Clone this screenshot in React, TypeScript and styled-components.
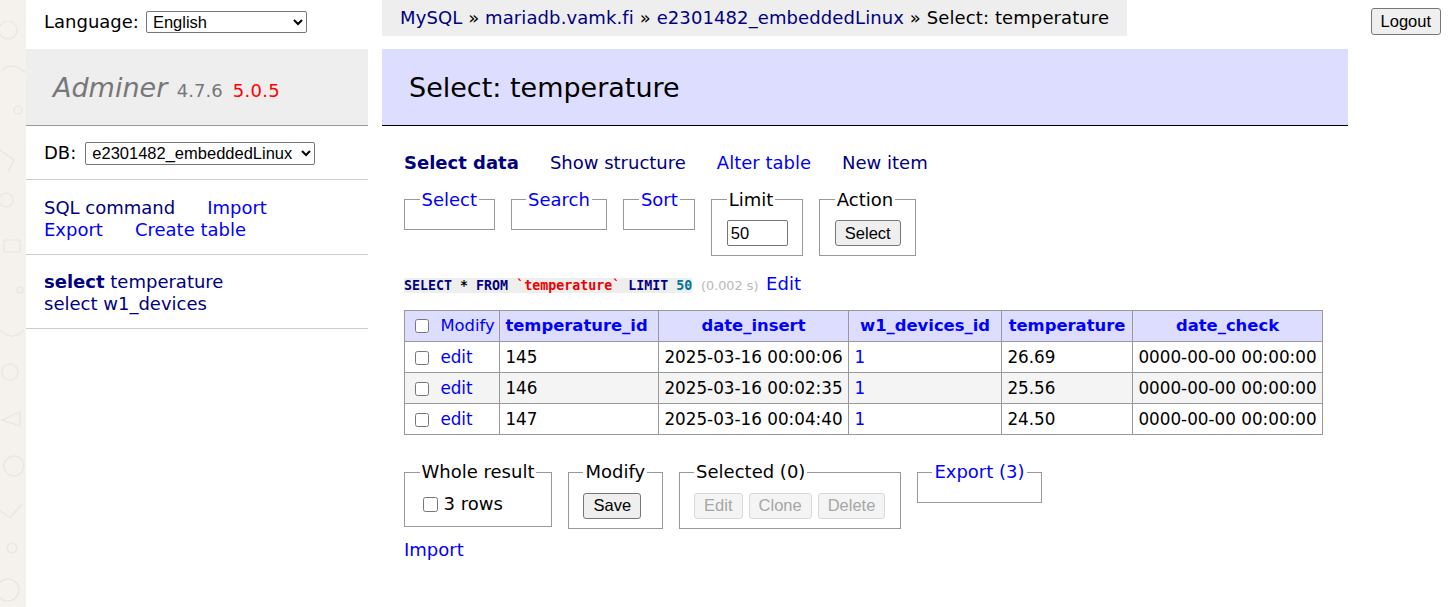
import React from "react";
import styled, { createGlobalStyle } from "styled-components";

const GlobalStyle = createGlobalStyle`
  html, body { margin: 0; padding: 0; background: #fff; }
  body {
    font: 18px/22.5px "DejaVu Sans", Verdana, sans-serif;
    color: #000;
  }
`;

const Page = styled.div`
  display: flex;
  align-items: flex-start;
  min-height: 607px;
`;

const Strip = styled.div`
  flex: none;
  width: 26px;
  align-self: stretch;
  background: #f5f2ed;
  overflow: hidden;
`;

const Sidebar = styled.aside`
  flex: none;
  width: 342px;
  display: flex;
  flex-direction: column;
`;

const LangBar = styled.div`
  height: 49px;
  padding: 0 18px 5px;
  display: flex;
  align-items: center;
  gap: 7px;
  box-sizing: border-box;
`;

const NativeSelect = styled.select<{ $w: number; $h: number }>`
  width: ${(p) => p.$w}px;
  height: ${(p) => p.$h}px;
  font: 16.5px "Liberation Sans", Arial, sans-serif;
  color: #000;
  border: 1px solid #767676;
  border-radius: 2px;
  background: #fff;
  padding: 0 0 0 2px;
  box-sizing: border-box;
`;

const Logo = styled.h1`
  margin: 0;
  height: 77px;
  box-sizing: border-box;
  padding: 2px 27px 0;
  background: #eee;
  border-bottom: 1px solid #999;
  font-size: 27px;
  font-weight: normal;
  line-height: 74px;
  color: #777;
  white-space: nowrap;
`;

const LogoName = styled.span`
  font-style: italic;
`;

const Version = styled.span`
  font-size: 18px;
  color: #777;
  margin-left: 1px;
`;

const NewVersion = styled.a`
  color: #f00;
  text-decoration: none;
  margin-left: 10px;
  letter-spacing: 0.3px;
`;

const MenuSection = styled.div<{ $shift?: number }>`
  padding: ${(p) => 14.4 + (p.$shift ?? 0)}px 18px ${(p) => 14.4 - (p.$shift ?? 0)}px;
  border-bottom: 1px solid #ccc;
`;

const DbRow = styled.div`
  height: 24px;
  display: flex;
  align-items: center;
  gap: 7px;
`;

const LinkWrap = styled.div`
  display: flex;
  flex-wrap: wrap;
  column-gap: 32px;
`;

const Link = styled.a<{ $visited?: boolean; $bold?: boolean }>`
  color: ${(p) => (p.$visited ? "#000080" : "#0000ff")};
  font-weight: ${(p) => (p.$bold ? "bold" : "normal")};
  text-decoration: none;
  white-space: nowrap;
`;

const TableLink = styled.div`
  color: #000080;
`;

const Strong = styled.b`
  font-weight: bold;
`;

const Main = styled.main`
  flex: none;
  width: 966px;
  margin-left: 14px;
  display: flex;
  flex-direction: column;
  align-items: flex-start;
`;

const Breadcrumb = styled.div`
  height: 36px;
  box-sizing: border-box;
  padding: 0 18px;
  background: #eee;
  line-height: 35px;
  letter-spacing: 0.1px;
  white-space: nowrap;
`;

const Title = styled.h2`
  margin: 13px 0 0;
  align-self: stretch;
  height: 77px;
  box-sizing: border-box;
  padding: 2px 27px 0;
  background: #ddf;
  border-bottom: 1px solid #000;
  font-size: 27px;
  font-weight: normal;
  line-height: 74px;
`;

const Body = styled.div`
  padding: 26px 0 0 22px;
`;

const Nav = styled.div`
  display: flex;
  gap: 31px;
`;

const BoxRow = styled.div<{ $mt: number }>`
  display: flex;
  align-items: flex-start;
  gap: 16px;
  margin-top: ${(p) => p.$mt}px;
`;

const Box = styled.fieldset`
  margin: 0;
  padding: 9px 14.5px;
  border: 1px solid #999;
  min-width: 0;
`;

const Legend = styled.legend`
  padding: 0 2px;
  line-height: 22.5px;
`;

const LegendLink = styled.a`
  color: #0000ff;
  text-decoration: none;
`;

const TextInput = styled.input`
  width: 61px;
  height: 26px;
  box-sizing: border-box;
  margin: 0;
  border: 1px solid #767676;
  border-radius: 2px;
  padding: 1px 3px;
  font: 16.5px "Liberation Sans", Arial, sans-serif;
  display: block;
`;

const Button = styled.button<{ $h?: number }>`
  height: ${(p) => p.$h ?? 25}px;
  box-sizing: border-box;
  margin: 0;
  padding: 0 9px;
  font: 16.5px "Liberation Sans", Arial, sans-serif;
  color: #000;
  background: #efefef;
  border: 1px solid #767676;
  border-radius: 3px;
  &:disabled {
    color: #a6a6a6;
    background: #f4f4f4;
    border-color: #d9d9d9;
  }
`;

const ButtonRow = styled.div`
  display: flex;
  gap: 6px;
`;

const SqlLine = styled.div`
  margin-top: 17px;
  white-space: nowrap;
`;

const Code = styled.code`
  background: #eee;
  font: bold 13.3px "DejaVu Sans Mono", "Liberation Mono", monospace;
  color: #000;
`;

const Kw = styled.span`
  color: #000080;
`;

const Quoted = styled.span`
  color: #e00;
`;

const Num = styled.span`
  color: #079;
`;

const Time = styled.span`
  color: #b8b8b8;
  font-size: 12.8px;
  margin-left: 3px;
`;

const EditLink = styled.a`
  color: #0000ff;
  text-decoration: none;
  margin-left: 2px;
`;

const Grid = styled.table`
  margin-top: 12.5px;
  border-collapse: collapse;
  table-layout: fixed;
  width: 919px;
`;

const Th = styled.th<{ $left?: boolean }>`
  border: 1px solid #999;
  padding: 3.6px 5.4px;
  height: 31px;
  box-sizing: border-box;
  background: #ddf;
  color: #0000ff;
  font-size: 16.4px;
  text-align: ${(p) => (p.$left ? "left" : "center")};
  white-space: nowrap;
  font-weight: bold;
`;

const Row = styled.tr<{ $odd?: boolean }>`
  background: ${(p) => (p.$odd ? "#f4f4f4" : "#fff")};
`;

const Td = styled.td`
  border: 1px solid #999;
  padding: 3.6px 5.4px;
  height: 31px;
  box-sizing: border-box;
  font-size: 16.8px;
  white-space: nowrap;
`;

const ModifyLink = styled.a`
  color: #0000ff;
  font-weight: normal;
  text-decoration: none;
`;

const Check = styled.input<{ $size: number }>`
  width: ${(p) => p.$size}px;
  height: ${(p) => p.$size}px;
  margin: 0 11px 0 5px;
  vertical-align: -2px;
`;

const RowsLabel = styled.label`
  display: flex;
  align-items: center;
  gap: 6px;
  height: 24px;
`;

const RowsCheck = styled.input`
  width: 15px;
  height: 15px;
  margin: 0 0 0 3px;
`;

const FooterLink = styled.div`
  margin-top: 10.5px;
`;

const Logout = styled.div`
  margin: 8px 10px 0 auto;
`;

const cols = [95, 159, 190, 153, 131, 190];

const rows = [
  { id: "145", ins: "2025-03-16 00:00:06", t: "26.69" },
  { id: "146", ins: "2025-03-16 00:02:35", t: "25.56" },
  { id: "147", ins: "2025-03-16 00:04:40", t: "24.50" },
];

const Doodles = () => (
  <svg width="26" height="607" viewBox="0 0 26 607" fill="none" stroke="#e9e4dd" strokeWidth="1.2">
    <circle cx="8" cy="30" r="9" />
    <path d="M2 70 q10 -8 20 0 t20 0" />
    <circle cx="18" cy="110" r="4" />
    <path d="M0 150 l14 10 l-6 12" />
    <circle cx="6" cy="200" r="7" />
    <path d="M4 240 h16 v12 h-16 z" />
    <circle cx="20" cy="290" r="3" />
    <path d="M0 330 q12 12 24 0" />
    <circle cx="10" cy="372" r="8" />
    <path d="M2 420 l18 -8 v14 z" />
    <circle cx="14" cy="466" r="10" />
    <path d="M0 510 l10 8 l12 -14" />
    <circle cx="12" cy="548" r="5" />
    <circle cx="8" cy="590" r="11" />
  </svg>
);

export default function App() {
  return (
    <>
      <GlobalStyle />
      <Page>
        <Strip>
          <Doodles />
        </Strip>
        <Sidebar>
          <LangBar>
            <span>Language:</span>
            <NativeSelect $w={161} $h={22} defaultValue="en">
              <option value="en">English</option>
            </NativeSelect>
          </LangBar>
          <Logo>
            <LogoName>Adminer</LogoName>{" "}
            <Version>
              4.7.6<NewVersion>5.0.5</NewVersion>
            </Version>
          </Logo>
          <MenuSection $shift={0.6}>
            <DbRow>
              <span>DB:</span>
              <NativeSelect $w={230} $h={23} defaultValue="db" style={{ marginLeft: 2 }}>
                <option value="db">e2301482_embeddedLinux</option>
              </NativeSelect>
            </DbRow>
          </MenuSection>
          <MenuSection $shift={2.4}>
            <LinkWrap>
              <Link $visited>SQL command</Link>
              <Link>Import</Link>
              <Link>Export</Link>
              <Link>Create table</Link>
            </LinkWrap>
          </MenuSection>
          <MenuSection $shift={2}>
            <TableLink>
              <Strong>select</Strong> temperature
            </TableLink>
            <TableLink>select w1_devices</TableLink>
          </MenuSection>
        </Sidebar>
        <Main>
          <Breadcrumb>
            <Link $visited>MySQL</Link> » <Link $visited>mariadb.vamk.fi</Link> »{" "}
            <Link $visited>e2301482_embeddedLinux</Link> » Select: temperature
          </Breadcrumb>
          <Title>Select: temperature</Title>
          <Body>
            <Nav>
              <Link $visited $bold>
                Select data
              </Link>
              <Link $visited>Show structure</Link>
              <Link>Alter table</Link>
              <Link $visited>New item</Link>
            </Nav>
            <BoxRow $mt={14}>
              <Box>
                <Legend>
                  <LegendLink>Select</LegendLink>
                </Legend>
              </Box>
              <Box>
                <Legend>
                  <LegendLink>Search</LegendLink>
                </Legend>
              </Box>
              <Box>
                <Legend>
                  <LegendLink>Sort</LegendLink>
                </Legend>
              </Box>
              <Box>
                <Legend>Limit</Legend>
                <TextInput defaultValue="50" />
              </Box>
              <Box>
                <Legend>Action</Legend>
                <Button $h={26}>Select</Button>
              </Box>
            </BoxRow>
            <SqlLine>
              <Code>
                <Kw>SELECT</Kw> * <Kw>FROM</Kw> <Quoted>`temperature`</Quoted> <Kw>LIMIT</Kw>{" "}
                <Num>50</Num>
              </Code>{" "}
              <Time>(0.002 s)</Time> <EditLink>Edit</EditLink>
            </SqlLine>
            <Grid>
              <colgroup>
                {cols.map((w, i) => (
                  <col key={i} style={{ width: w }} />
                ))}
              </colgroup>
              <thead>
                <tr>
                  <Th $left>
                    <Check type="checkbox" $size={14} />
                    <ModifyLink>Modify</ModifyLink>
                  </Th>
                  <Th $left>temperature_id</Th>
                  <Th>date_insert</Th>
                  <Th>w1_devices_id</Th>
                  <Th>temperature</Th>
                  <Th>date_check</Th>
                </tr>
              </thead>
              <tbody>
                {rows.map((r, i) => (
                  <Row key={r.id} $odd={i % 2 === 1}>
                    <Td>
                      <Check type="checkbox" $size={14} />
                      <Link>edit</Link>
                    </Td>
                    <Td>{r.id}</Td>
                    <Td>{r.ins}</Td>
                    <Td>
                      <Link>1</Link>
                    </Td>
                    <Td>{r.t}</Td>
                    <Td>0000-00-00 00:00:00</Td>
                  </Row>
                ))}
              </tbody>
            </Grid>
            <BoxRow $mt={26}>
              <Box>
                <Legend>Whole result</Legend>
                <RowsLabel>
                  <RowsCheck type="checkbox" />3 rows
                </RowsLabel>
              </Box>
              <Box>
                <Legend>Modify</Legend>
                <ButtonRow>
                  <Button $h={26}>Save</Button>
                </ButtonRow>
              </Box>
              <Box>
                <Legend>Selected (0)</Legend>
                <ButtonRow>
                  <Button disabled $h={26}>Edit</Button>
                  <Button disabled $h={26}>Clone</Button>
                  <Button disabled $h={26}>Delete</Button>
                </ButtonRow>
              </Box>
              <Box>
                <Legend>
                  <LegendLink>Export (3)</LegendLink>
                </Legend>
              </Box>
            </BoxRow>
            <FooterLink>
              <Link>Import</Link>
            </FooterLink>
          </Body>
        </Main>
        <Logout>
          <Button $h={27}>Logout</Button>
        </Logout>
      </Page>
    </>
  );
}
